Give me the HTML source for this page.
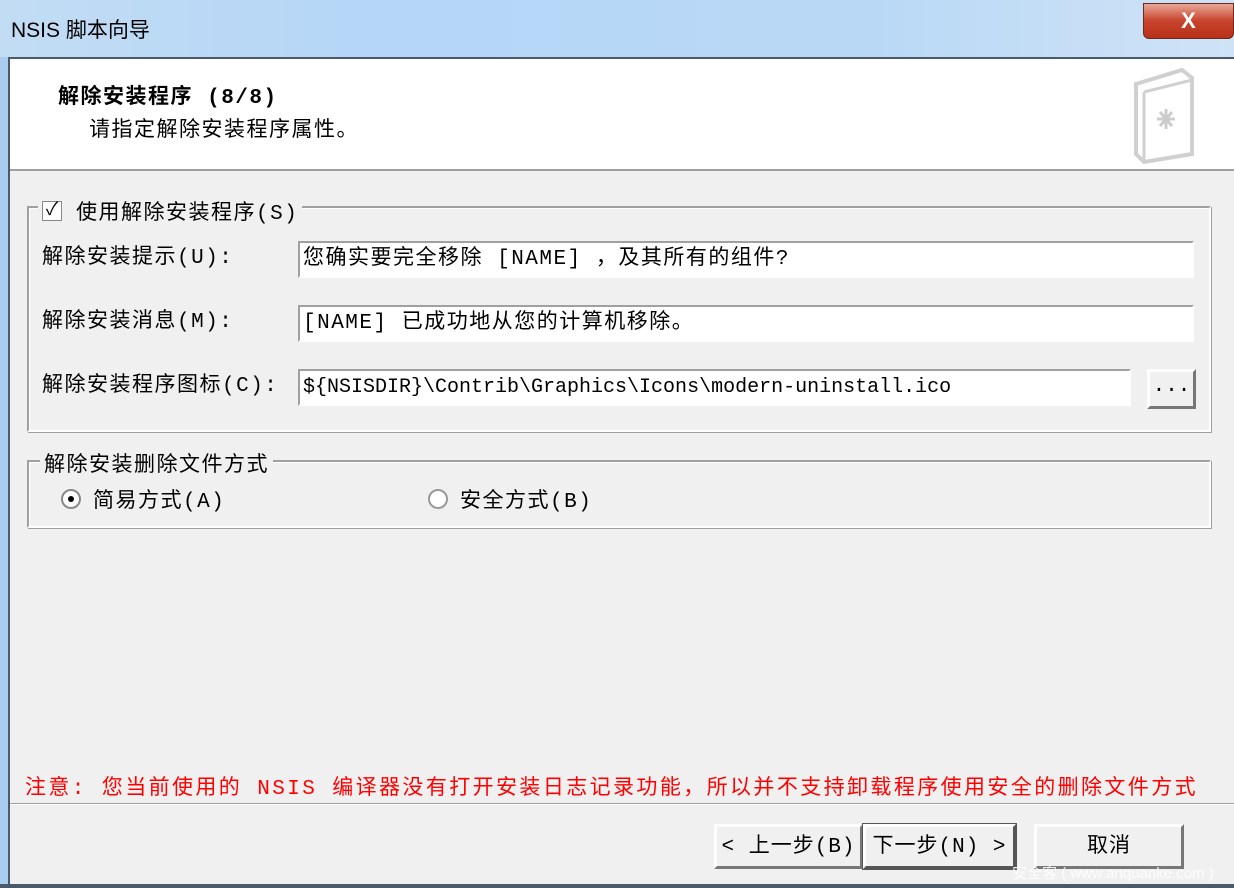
<!DOCTYPE html><html><head><meta charset="utf-8"><style>
*{margin:0;padding:0;box-sizing:border-box}
body{width:1234px;height:888px;overflow:hidden;background:#a9cdef;font-family:"Liberation Mono","Noto Sans CJK SC","WenQuanYi Zen Hei",monospace;font-size:21px;letter-spacing:1.5px;color:#000;position:relative}
.a{position:absolute;white-space:nowrap}
.title{left:0;top:0;width:1234px;height:57px;background:linear-gradient(90deg,#c2dcf4 0%,#b5d6f7 30%,#b9d8f6 70%,#cfe3f6 100%)}
.cl{left:1143px;top:3px;width:91px;height:36px;background:linear-gradient(#e8a898,#c8442c 50%,#b83018);border:1px solid #6a2a20;border-radius:0 0 6px 6px;color:#fff;font:bold 22px "Liberation Sans",sans-serif;text-align:center;line-height:34px;letter-spacing:0}
.win{left:8px;top:57px;width:1226px;height:827px;background:#f0f0f0;border-left:2px solid #4a5a6a;border-top:2px solid #4a5a6a}
.hdr{left:10px;top:59px;width:1224px;height:112px;background:#fff;border-bottom:2px solid #a0a0a0}
.grp{border:2px solid #a0a0a0;border-right-color:#fff;border-bottom-color:#fff;box-shadow:inset 1px 1px 0 #fff, 1px 1px 0 #a0a0a0}
.edit{background:#fff;border:2px solid #a0a0a0;border-right-color:#fff;border-bottom-color:#fff;padding:3px 0 0 3px;white-space:nowrap;line-height:28px}
.btn{background:#f0f0f0;border:3px solid #fff;border-right-color:#777;border-bottom-color:#777;text-align:center;line-height:42px;letter-spacing:1px}
.lbl{background:#f0f0f0;padding:0 4px}
</style></head><body>
<div class="a title"></div>
<div class="a" style="left:11px;top:14px;font-family:'Liberation Sans','Noto Sans CJK SC',sans-serif;font-size:21px;letter-spacing:0">NSIS 脚本向导</div>
<div class="a cl">X</div>
<div class="a win"></div>
<div class="a hdr"></div>
<div class="a" style="left:58px;top:80px;font-weight:bold">解除安装程序 (8/8)</div>
<div class="a" style="left:89px;top:113px">请指定解除安装程序属性。</div>
<svg class="a" style="left:1130px;top:64px" width="72" height="100"><path d="M6 20 L52 6 L62 14 L62 90 L14 98 L6 90 Z" fill="none" stroke="#d0d0d0" stroke-width="4"/><path d="M14 28 L62 16 M14 28 L14 98" stroke="#d0d0d0" stroke-width="3" fill="none"/><path d="M36 45 V65 M27 55 H45 M30 48 L42 62 M42 48 L30 62" stroke="#ccc" stroke-width="3"/></svg>
<div class="a grp" style="left:27px;top:206px;width:1184px;height:226px"></div>
<div class="a lbl" style="left:38px;top:196px;display:flex;align-items:center"><span style="display:inline-block;width:20px;height:20px;border:1px solid #888;background:#fff;font-size:18px;line-height:18px;text-align:center;margin-right:14px;letter-spacing:0">✓</span>使用解除安装程序(S)</div>
<div class="a" style="left:42px;top:240px">解除安装提示(U):</div>
<div class="a edit" style="left:298px;top:241px;width:896px;height:37px">您确实要完全移除 [NAME] ，及其所有的组件?</div>
<div class="a" style="left:42px;top:304px">解除安装消息(M):</div>
<div class="a edit" style="left:298px;top:305px;width:896px;height:37px">[NAME] 已成功地从您的计算机移除。</div>
<div class="a" style="left:42px;top:368px">解除安装程序图标(C):</div>
<div class="a edit" style="left:298px;top:369px;width:833px;height:37px;font-size:20px;letter-spacing:0">${NSISDIR}\Contrib\Graphics\Icons\modern-uninstall.ico</div>
<div class="a btn" style="left:1147px;top:369px;width:49px;height:40px;line-height:30px;letter-spacing:0">...</div>
<div class="a grp" style="left:27px;top:460px;width:1184px;height:68px"></div>
<div class="a lbl" style="left:40px;top:448px">解除安装删除文件方式</div>
<div class="a" style="left:61px;top:484px;display:flex;align-items:center"><span style="display:inline-block;width:20px;height:20px;border-radius:50%;border:2px solid #888;background:#fff;position:relative;margin-right:12px"><span style="position:absolute;left:5px;top:5px;width:6px;height:6px;border-radius:50%;background:#000"></span></span>简易方式(A)</div>
<div class="a" style="left:428px;top:484px;display:flex;align-items:center"><span style="display:inline-block;width:20px;height:20px;border-radius:50%;border:2px solid #999;background:#fff;margin-right:12px"></span>安全方式(B)</div>
<div class="a" style="left:25px;top:771px;color:#f00;letter-spacing:2.4px">注意: 您当前使用的 NSIS 编译器没有打开安装日志记录功能，所以并不支持卸载程序使用安全的删除文件方式</div>
<div class="a" style="left:10px;top:803px;width:1224px;height:2px;background:#a0a0a0;border-bottom:1px solid #fff"></div>
<div class="a btn" style="left:714px;top:824px;width:149px;height:45px">&lt; 上一步(B)</div>
<div class="a btn" style="left:863px;top:824px;width:153px;height:45px;border-right-color:#555;border-bottom-color:#555;outline:1px solid #555">下一步(N) &gt;</div>
<div class="a btn" style="left:1034px;top:824px;width:150px;height:45px">取消</div>
<div class="a" style="left:1012px;top:862px;color:#fff;font-family:'Liberation Sans','Noto Sans CJK SC',sans-serif;font-size:15px;letter-spacing:0;opacity:.9">安全客 ( www.anquanke.com )</div>
<div class="a" style="left:0;top:884px;width:1234px;height:4px;background:#4a5a6a"></div>
</body></html>
